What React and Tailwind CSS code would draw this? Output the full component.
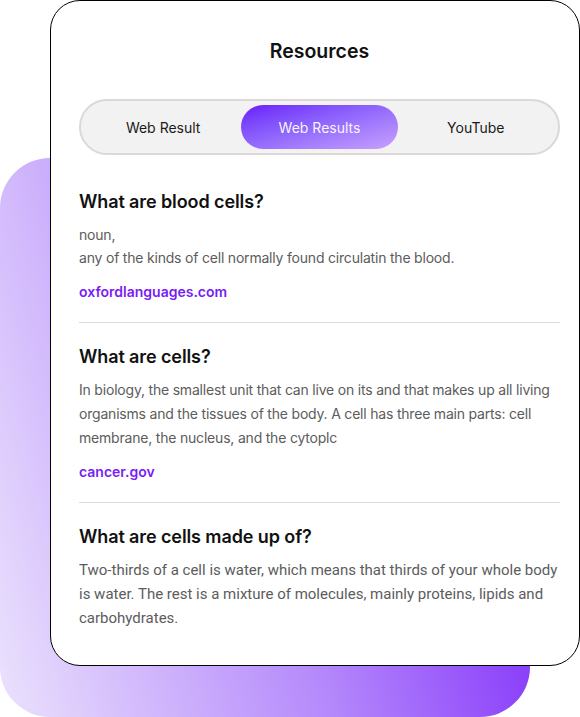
import React, { useState } from 'react';

const tabs = ['Web Result', 'Web Results', 'YouTube'];

const results = [
  {
    title: 'What are blood cells?',
    body: ['noun,', 'any of the kinds of cell normally found circulatin the blood.'],
    link: 'oxfordlanguages.com',
    tight: true,
    linkGap: 'mt-[13px]',
  },
  {
    title: 'What are cells?',
    body: [
      'In biology, the smallest unit that can live on its and that makes up all living organisms and the tissues of the body. A cell has three main parts: cell membrane, the nucleus, and the cytoplc',
    ],
    link: 'cancer.gov',
    linkGap: 'mt-[12px]',
  },
  {
    title: 'What are cells made up of?',
    body: [
      'Two-thirds of a cell is water, which means that thirds of your whole body is water. The rest is a mixture of molecules, mainly proteins, lipids and carbohydrates.',
    ],
    alt: true,
  },
];

const ResultItem = ({ item, last }) => (
  <div className={`pt-[20px] ${last ? 'pb-0' : 'pb-[20px] border-b border-[#dcdcdc]'}`}>
    <h3 className="text-[18px] leading-[28px] font-semibold tracking-[-0.1px] text-[#111111]">{item.title}</h3>
    <div
      className={`mt-[7px] ${item.tight ? 'leading-[23px]' : 'leading-[24px]'} ${
        item.alt
          ? "text-[15px] text-[#5c5c5c] font-['Roboto',sans-serif]"
          : 'text-[14px] tracking-[-0.2px] text-[#5c5c5c]'
      }`}
    >
      {item.body.map((line, i) => (
        <p key={i}>{line}</p>
      ))}
    </div>
    {item.link && (
      <a className={`block ${item.linkGap} text-[14px] leading-[20px] font-semibold text-[#7a1cf6]`}>{item.link}</a>
    )}
  </div>
);

export default function App() {
  const [active, setActive] = useState(1);

  return (
    <div className="w-[580px] h-[717px] bg-white overflow-hidden font-['Inter',sans-serif]">
      <div className="grid">
        {/* back gradient card */}
        <div className="col-start-1 row-start-1 mt-[158px] w-[530px] h-[559px] rounded-[50px] bg-linear-[75deg] from-[#ebe2fd] via-[#b386fb] to-[#7010f9]" />

        {/* main card */}
        <div className="col-start-1 row-start-1 ml-[50px] w-[530px] h-[666px] rounded-[30px] border-[1.5px] border-black bg-white pl-[28px] pr-[19px]">
          <h2 className="pt-[36px] text-center text-[19.5px] leading-[28px] font-semibold text-[#111111]">Resources</h2>

          <div className="mt-[34px] grid grid-cols-3 h-[56px] rounded-full border-2 border-[#ddd7d7] bg-[#f3f2f2] p-[4px]">
            {tabs.map((t, i) => (
              <button
                key={t}
                onClick={() => setActive(i)}
                className={`rounded-full text-[14px] ${
                  i === active
                    ? 'bg-linear-to-br from-[#6a0af9] to-[#c9a0fd] text-white/95'
                    : 'text-[#1a1a1a]'
                }`}
              >
                {t}
              </button>
            ))}
          </div>

          <div className="mt-[13px]">
            {results.map((r, i) => (
              <ResultItem key={r.title} item={r} last={i === results.length - 1} />
            ))}
          </div>
        </div>
      </div>
    </div>
  );
}
